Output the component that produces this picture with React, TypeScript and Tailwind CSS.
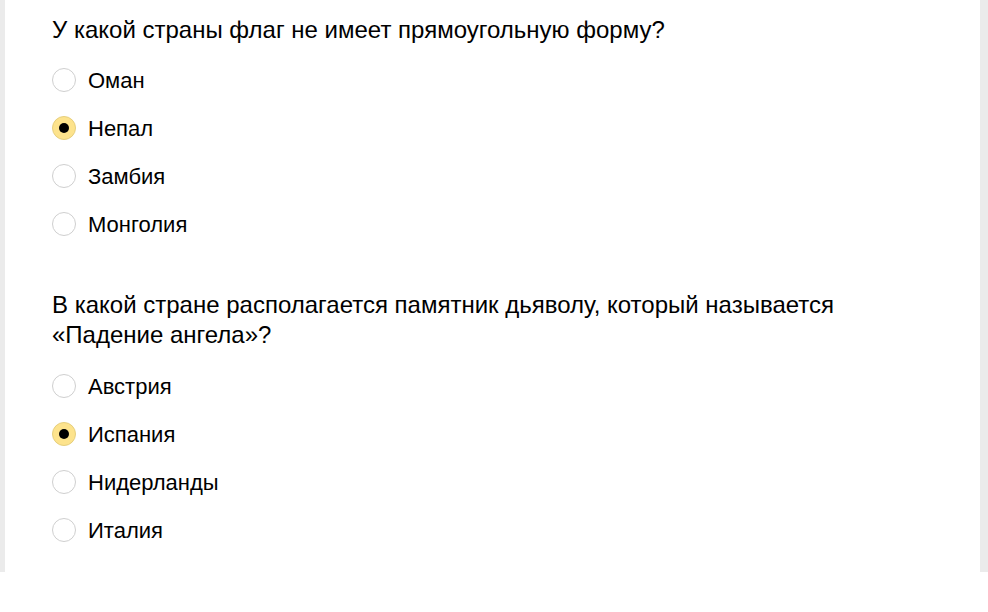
const questions = [
  {
    text: "У какой страны флаг не имеет прямоугольную форму?",
    options: ["Оман", "Непал", "Замбия", "Монголия"],
    selected: 1,
  },
  {
    text: "В какой стране располагается памятник дьяволу, который называется «Падение ангела»?",
    options: ["Австрия", "Испания", "Нидерланды", "Италия"],
    selected: 1,
  },
];

function Radio({ checked }: { checked: boolean }) {
  if (checked) {
    return (
      <span className="w-6 h-6 rounded-full bg-[#fde38c] border border-[#e6cf7e] flex items-center justify-center shrink-0">
        <span className="w-[10px] h-[10px] rounded-full bg-black" />
      </span>
    );
  }
  return <span className="w-6 h-6 rounded-full bg-white border border-[#cfcfcf] shrink-0" />;
}

export default function App() {
  return (
    <div className="w-[988px] h-[612px] bg-white font-['Liberation_Sans',Arial,sans-serif] text-black">
      <div className="h-[572px] bg-[#ebebeb] pl-[5px] pr-[8px]">
        <div className="h-full bg-white pl-[47px] pt-[15px]">
          {questions.map((q, qi) => (
            <div key={qi} className={qi > 0 ? "mt-[42px]" : ""}>
              <div className="text-[24px] leading-[30px] max-w-[860px]">{q.text}</div>
              <div className={qi > 0 ? "mt-3" : "mt-[11px]"}>
                {q.options.map((o, oi) => (
                  <label key={oi} className="h-12 flex items-center gap-3 text-[22px]">
                    <Radio checked={oi === q.selected} />
                    <span>{o}</span>
                  </label>
                ))}
              </div>
            </div>
          ))}
        </div>
      </div>
    </div>
  );
}
